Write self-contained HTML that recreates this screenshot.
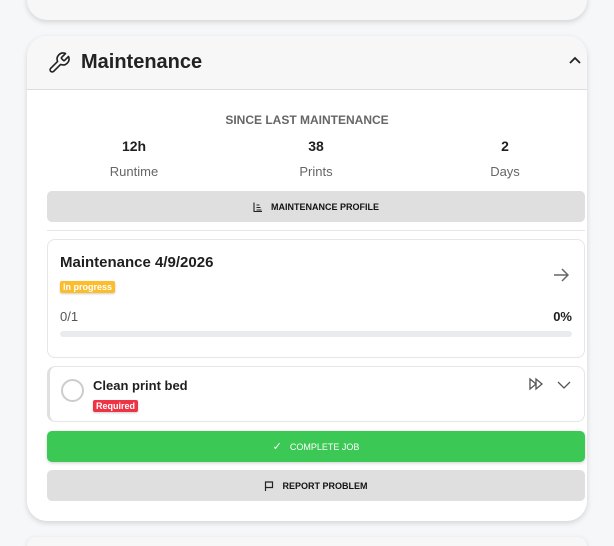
<!DOCTYPE html>
<html style="overflow:hidden;height:546px"><head><style>
*{box-sizing:border-box;margin:0;padding:0}
body{width:614px;height:546px;overflow:hidden;background:#f5f7f9;font-family:"Liberation Sans",sans-serif;color:#1f1f1f;position:relative}
.card{position:absolute;left:27px;width:560px;border-radius:20px;background:#fff;box-shadow:0 2px 6px rgba(0,0,0,.15)}
.top{top:-30px;height:50px;background:#f7f7f7}
.bot{top:537px;height:9px;border-radius:20px 20px 0 0;background:#f7f7f7}
.main{top:36px;height:485px;overflow:hidden}
.hdr{height:54px;background:#f7f7f7;border-bottom:1px solid #ddd;position:relative}
.hdr .t{position:absolute;left:54px;top:15px;font-size:20px;font-weight:bold;color:#222}
.abs{position:absolute}
.stat{position:absolute;width:180px;text-align:center}
.btn{position:absolute;left:20px;width:538px;border-radius:5px;font-size:9px;font-weight:bold;text-align:center;display:flex;align-items:center;justify-content:center;gap:8px}
.box{position:absolute;left:20px;width:538px;border:1px solid #e6e6e6;border-radius:8px}
.tag{position:absolute;font-size:9px;font-weight:bold;color:#fff;padding:1px 3px;border-radius:2px;box-shadow:0 1px 2px rgba(0,0,0,.2)}
</style></head><body>
<div class="card top"></div>
<div class="card main">
 <div class="hdr">
  <svg class="abs" style="left:20px;top:15px" width="24" height="24" viewBox="0 0 24 24" fill="none" stroke="#222" stroke-width="1.6" stroke-linejoin="round"><path d="M14.7 6.3a1 1 0 0 0 0 1.4l1.6 1.6a1 1 0 0 0 1.4 0l3.8-3.8a6 6 0 0 1-7.9 7.9l-6.9 6.9a2.1 2.1 0 0 1-3-3l6.9-6.9a6 6 0 0 1 7.9-7.9z"/></svg>
  <div class="t">Maintenance</div>
  <svg class="abs" style="left:541px;top:20px" width="14" height="10" viewBox="0 0 14 10" fill="none" stroke="#222" stroke-width="1.8"><path d="M2 7l5-5 5 5"/></svg>
 </div>
 <div class="abs" style="left:0;width:560px;top:77px;text-align:center;font-size:12px;font-weight:bold;color:#666">SINCE LAST MAINTENANCE</div>
 <div class="stat" style="left:17px;top:102px;font-size:14px;font-weight:bold">12h</div>
 <div class="stat" style="left:199px;top:102px;font-size:14px;font-weight:bold">38</div>
 <div class="stat" style="left:388px;top:102px;font-size:14px;font-weight:bold">2</div>
 <div class="stat" style="left:17px;top:128px;font-size:13px;color:#666">Runtime</div>
 <div class="stat" style="left:199px;top:128px;font-size:13px;color:#666">Prints</div>
 <div class="stat" style="left:388px;top:128px;font-size:13px;color:#666">Days</div>
 <div class="btn" style="top:155px;height:31px;background:#dfdfdf;color:#111"><svg width="10" height="10" viewBox="0 0 10 10" fill="none" stroke="#222" stroke-width="1.1"><path d="M1 0.5v9h8M3.5 3h3M3.5 5.5h4M3.5 8h5"/></svg>MAINTENANCE PROFILE</div>
 <div class="abs" style="left:20px;top:194px;width:538px;border-top:1px solid #e6e6e6"></div>
 <div class="box" style="top:203px;height:119px">
  <div class="abs" style="left:12px;top:14px;font-size:15px;font-weight:bold">Maintenance 4/9/2026</div>
  <div class="tag" style="left:12px;top:41px;background:#fbbd2c">In progress</div>
  <svg class="abs" style="left:505px;top:28px" width="16" height="14" viewBox="0 0 16 14" fill="none" stroke="#666" stroke-width="1.5"><path d="M1 7h14M9 1l6 6-6 6"/></svg>
  <div class="abs" style="left:12px;top:69px;font-size:13px;color:#555">0/1</div>
  <div class="abs" style="right:12px;top:69px;font-size:13px;font-weight:bold">0%</div>
  <div class="abs" style="left:12px;top:91px;width:512px;height:6px;border-radius:3px;background:#e9ecef"></div>
 </div>
 <div class="box" style="top:330px;height:56px;border-left:3px solid #e0e0e0">
  <div class="abs" style="left:11px;top:12px;width:23px;height:23px;border:2px solid #ccc;border-radius:50%"></div>
  <div class="abs" style="left:43px;top:11px;font-size:13px;font-weight:bold">Clean print bed</div>
  <div class="tag" style="left:43px;top:33px;background:#ee3344">Required</div>
  <svg class="abs" style="left:478px;top:10px" width="16" height="14" viewBox="0 0 16 14" fill="none" stroke="#555" stroke-width="1.3"><path d="M2 2v10l6-5zM8 2v10l6-5z"/></svg>
  <svg class="abs" style="left:507px;top:14px" width="14" height="9" viewBox="0 0 14 9" fill="none" stroke="#555" stroke-width="1.3"><path d="M1 1l6 6 6-6"/></svg>
 </div>
 <div class="btn" style="top:395px;height:31px;background:#3cc855;color:#fff;font-weight:normal;box-shadow:0 1px 3px rgba(0,0,0,.2)"><span style="font-size:11px">&#10003;</span>COMPLETE JOB</div>
 <div class="btn" style="top:434px;height:31px;background:#dfdfdf;color:#111"><svg width="10" height="10" viewBox="0 0 10 10" fill="none" stroke="#222" stroke-width="1.2"><path d="M1.5 10V1h7v5.5h-7"/></svg>REPORT PROBLEM</div>
</div>
<div class="card bot"></div>
</body></html>
